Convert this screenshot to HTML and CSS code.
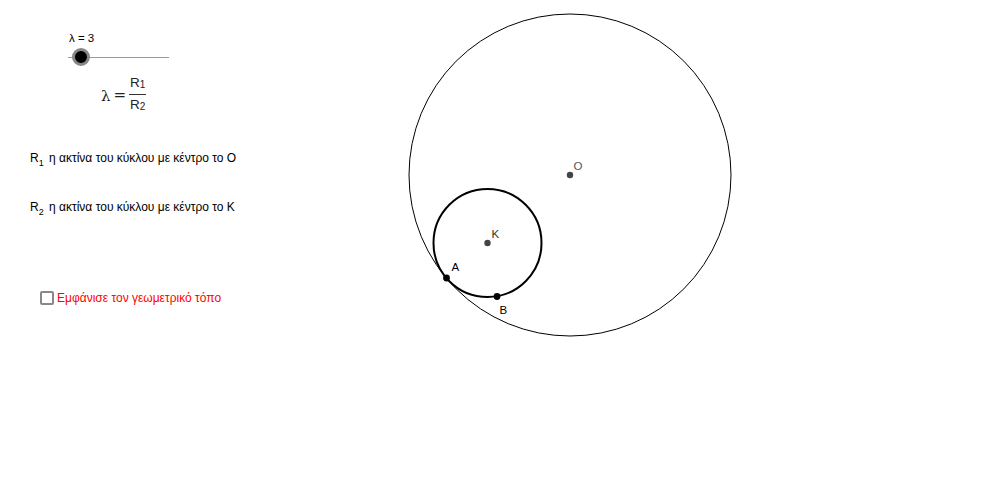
FILE: index.html
```html
<!DOCTYPE html>
<html lang="el">
<head>
<meta charset="utf-8">
<title>Γεωμετρικός τόπος</title>
<link rel="stylesheet" href="styles.css">
</head>
<body>
<div class="stage">
  <svg class="canvas" width="995" height="501" viewBox="0 0 995 501">
    <circle cx="570" cy="175" r="161" fill="none" stroke="#000" stroke-width="1"/>
    <circle cx="487.5" cy="243" r="54" fill="none" stroke="#000" stroke-width="2"/>
    <circle cx="570" cy="175" r="3.2" fill="#444"/>
    <circle cx="487.5" cy="243" r="3.2" fill="#444"/>
    <circle cx="446.5" cy="278" r="3.4" fill="#000"/>
    <circle cx="497" cy="296.5" r="3.4" fill="#000"/>
    <text x="573.5" y="170" class="lbl lbl-gray">O</text>
    <text x="491.5" y="238" class="lbl lbl-dark">K</text>
    <text x="451.5" y="271" class="lbl">A</text>
    <text x="499.5" y="314" class="lbl">B</text>
  </svg>
  <div class="panel">
    <div class="slider">
      <div class="slider-label">λ = 3</div>
      <div class="slider-track"><span class="knob"></span></div>
    </div>
    <div class="formula">
      <span class="lam">λ</span><span class="eq">=</span>
      <span class="frac">
        <span class="num">R<sub>1</sub></span>
        <span class="den">R<sub>2</sub></span>
      </span>
    </div>
    <p class="def def-first">R<sub>1</sub> η ακτίνα του κύκλου με κέντρο το Ο</p>
    <p class="def def-second">R<sub>2</sub> η ακτίνα του κύκλου με κέντρο το Κ</p>
    <label class="toggle"><span class="box"></span><span class="toggle-text">Εμφάνισε τον γεωμετρικό τόπο</span></label>
  </div>
</div>
</body>
</html>
```
FILE: styles.css
```css
html, body {
  margin: 0;
  padding: 0;
  background: #fff;
}
body {
  font-family: "Liberation Sans", Arial, sans-serif;
  color: #000;
}
.stage {
  position: relative;
  width: 995px;
  height: 501px;
  overflow: hidden;
}
.canvas {
  position: absolute;
  left: 0;
  top: 0;
}
.lbl {
  font-family: "Liberation Sans", Arial, sans-serif;
  font-size: 11.5px;
  fill: #000;
}
.lbl-gray { fill: #555; }
.lbl-dark { fill: #333; }

.panel {
  position: relative;
  display: flex;
  flex-direction: column;
  align-items: flex-start;
  padding-top: 32px;
}
.slider {
  margin-left: 68px;
  display: flex;
  flex-direction: column;
}
.slider-label {
  font-size: 11.5px;
  line-height: 13px;
  height: 13px;
  padding-left: 1px;
}
.slider-track {
  position: relative;
  margin-top: 12px;
  width: 101px;
  height: 1px;
  background: #999;
}
.knob {
  position: absolute;
  left: 4px;
  top: -9px;
  width: 12px;
  height: 12px;
  border-radius: 50%;
  background: #000;
  border: 3px solid #888;
}
.formula {
  margin-left: 101px;
  margin-top: 17px;
  display: flex;
  align-items: center;
  color: #222;
}
.lam {
  font-family: "DejaVu Serif", serif;
  font-size: 15px;
  margin-right: 3px;
  padding-top: 3px;
}
.eq {
  font-family: "DejaVu Sans", sans-serif;
  font-size: 15px;
  margin-right: 3px;
  padding-top: 1px;
}
.frac {
  display: inline-flex;
  flex-direction: column;
  align-items: center;
}
.num, .den {
  font-family: "Liberation Sans", Arial, sans-serif;
  font-size: 13.5px;
  line-height: 15px;
  padding: 0 1px;
}
.num {
  border-bottom: 1px solid #333;
  padding-bottom: 2px;
}
.den {
  padding-top: 2px;
}
.num sub, .den sub {
  font-size: 10px;
  vertical-align: -1px;
}
.def {
  margin: 0;
  margin-left: 30px;
  font-size: 12px;
  line-height: 14px;
}
.def sub {
  font-size: 9px;
  vertical-align: -4px;
  line-height: 0;
  margin-right: 2px;
}
.def-first { margin-top: 37px; }
.def-second { margin-top: 35px; }
.toggle {
  margin-left: 40px;
  margin-top: 77px;
  display: flex;
  align-items: center;
  color: #f00;
  font-size: 12px;
}
.box {
  width: 10px;
  height: 10px;
  border: 2px solid #888;
  border-radius: 2px;
  margin-right: 3px;
  background: #fff;
}
```
